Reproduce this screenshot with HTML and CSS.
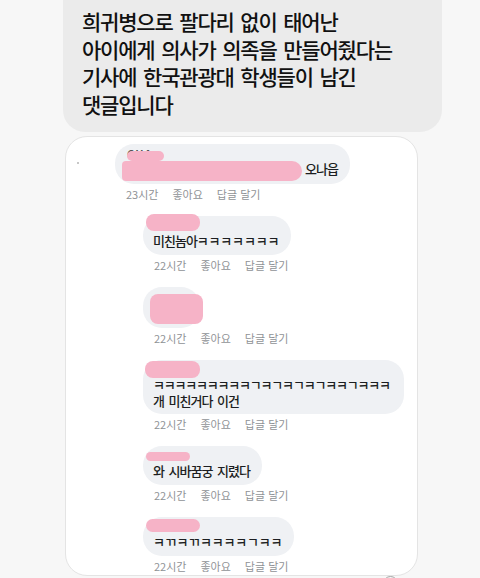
FILE: index.html
```html
<!DOCTYPE html>
<html lang="ko">
<head>
  <meta charset="UTF-8">
  <title>댓글</title>
  <link rel="stylesheet" href="styles.css">
</head>
<body>
  <div class="post">
    희귀병으로 팔다리 없이 태어난<br>
    아이에게 의사가 의족을 만들어줬다는<br>
    기사에 한국관광대 학생들이 남긴<br>
    댓글입니다
  </div>

  <div class="card">
    <div class="comment top">
      <span class="dot"></span>
      <div class="c-body">
        <div class="bubble b1">
          <div class="name"><span class="nick">CHA</span></div>
          <div class="text"><span class="blot-inline"></span>오나읍</div>
          <span class="blot n1"></span>
        </div>
        <div class="meta"><span>23시간</span><span>좋아요</span><span>답글 달기</span></div>
      </div>
    </div>

    <div class="comment reply">
      <div class="c-body">
        <div class="bubble">
          <div class="name"></div>
          <div class="text">미친놈아<span class="kk">ㅋㅋㅋㅋㅋㅋㅋ</span></div>
          <span class="blot n2"></span>
        </div>
        <div class="meta"><span>22시간</span><span>좋아요</span><span>답글 달기</span></div>
      </div>
    </div>

    <div class="comment reply">
      <div class="c-body">
        <div class="bubble empty">
          <span class="blot n3"></span>
        </div>
        <div class="meta"><span>22시간</span><span>좋아요</span><span>답글 달기</span></div>
      </div>
    </div>

    <div class="comment reply">
      <div class="c-body">
        <div class="bubble b4">
          <div class="name"></div>
          <div class="text"><span class="kk tight">ㅋㅋㅋㅋㅋㅋㅋㅋㅋㄱㅋㄱㅋㄱㅋㄱㅋㅋㄱㅋㅋㅋ</span><br>개 미친거다 이건</div>
          <span class="blot n4"></span>
        </div>
        <div class="meta"><span>22시간</span><span>좋아요</span><span>답글 달기</span></div>
      </div>
    </div>

    <div class="comment reply">
      <div class="c-body">
        <div class="bubble">
          <div class="name"></div>
          <div class="text">와 시바꿈궁 지렸다</div>
          <span class="blot n5"></span>
        </div>
        <div class="meta"><span>22시간</span><span>좋아요</span><span>답글 달기</span></div>
      </div>
    </div>

    <div class="comment reply">
      <div class="c-body">
        <div class="bubble">
          <div class="name"></div>
          <div class="text"><span class="kk">ㅋㄲㅋㄲㅋㅋㅋㅋㄱㅋㅋ</span></div>
          <span class="blot n6"></span>
        </div>
        <div class="meta"><span>22시간</span><span>좋아요</span><span>답글 달기</span></div>
      </div>
    </div>
  </div>

  <div class="react">
    <span class="react-circle"></span>
    <span class="react-bar"></span>
  </div>
</body>
</html>
```

FILE: styles.css
```css
body { margin: 0; background: #f7f7f7; font-family: "Noto Sans CJK KR", "Noto Sans", sans-serif; color: #111; }

/* 위쪽 회색 말풍선 */
.post { margin-left: 63px; width: 360px; padding: 8px 0 14px 19px; background: #ebebeb; border-radius: 0 0 22px 22px; font-size: 21px; font-weight: 500; line-height: 27.6px; letter-spacing: -1.2px; word-spacing: 2px; white-space: nowrap; }

/* 캡처된 댓글 카드 */
.card { display: flex; flex-direction: column; gap: 15px; margin: 4px 0 0 65px; width: 351px; padding: 7px 0 2px; background: #fff; border: 1px solid #e4e4e4; border-radius: 22px; }
.comment { display: flex; align-items: flex-start; }
.comment.top { padding-left: 11px; }
.comment.reply { padding-left: 77px; }
.dot { width: 2px; height: 2px; margin: 18px 36px 0 0; background: #b5b5b5; border-radius: 50%; }
.c-body { display: flex; flex-direction: column; align-items: flex-start; }

.bubble { position: relative; background: #eff1f4; border-radius: 19px; padding: 4px 12px 6px 10px; }
.bubble.empty { width: 57px; height: 41px; padding: 0; box-sizing: border-box; }
.bubble.b4 { padding-bottom: 5px; padding-right: 14px; }
.name { height: 13px; }
.nick { display: block; padding-left: 2px; font-size: 11px; line-height: 13px; font-weight: bold; color: #555; letter-spacing: 1px; }
.text { font-size: 13px; font-weight: 500; line-height: 16px; letter-spacing: -1px; word-spacing: 2px; color: #1c1e21; white-space: nowrap; }
.kk { letter-spacing: -0.2px; }
.kk.tight { letter-spacing: -1.2px; }

.meta { display: flex; gap: 14px; margin-top: 3px; padding-left: 11px; font-size: 11px; line-height: 14px; color: #8f9296; }

/* 이름 가린 분홍 형광펜 */
.blot { position: absolute; background: #f6b3c7; border-radius: 8px; filter: blur(0.5px); }
.blot-inline { display: inline-block; width: 180px; height: 20px; margin: -3px 3px -3px -3px; vertical-align: middle; background: #f6b3c7; border-radius: 4px 10px 10px 4px; filter: blur(0.5px); }
.n1 { left: 12px; top: 7px; width: 37px; height: 10px; }
.n2 { left: 3px; top: -2px; width: 54px; height: 17px; }
.n3 { left: 7px; top: 7px; width: 53px; height: 30px; }
.n4 { left: 2px; top: 1px; width: 55px; height: 17px; }
.n5 { left: 3px; top: 6px; width: 44px; height: 9px; }
.n6 { left: 3px; top: 2px; width: 54px; height: 13px; }

.react { display: flex; align-items: flex-start; margin-left: 383px; }
.react-circle { width: 13px; height: 13px; border: 1.5px solid #a5a5a5; border-radius: 50%; }
.react-bar { width: 1px; height: 12px; margin: 2px 0 0 8px; background: #aaa; }
```
